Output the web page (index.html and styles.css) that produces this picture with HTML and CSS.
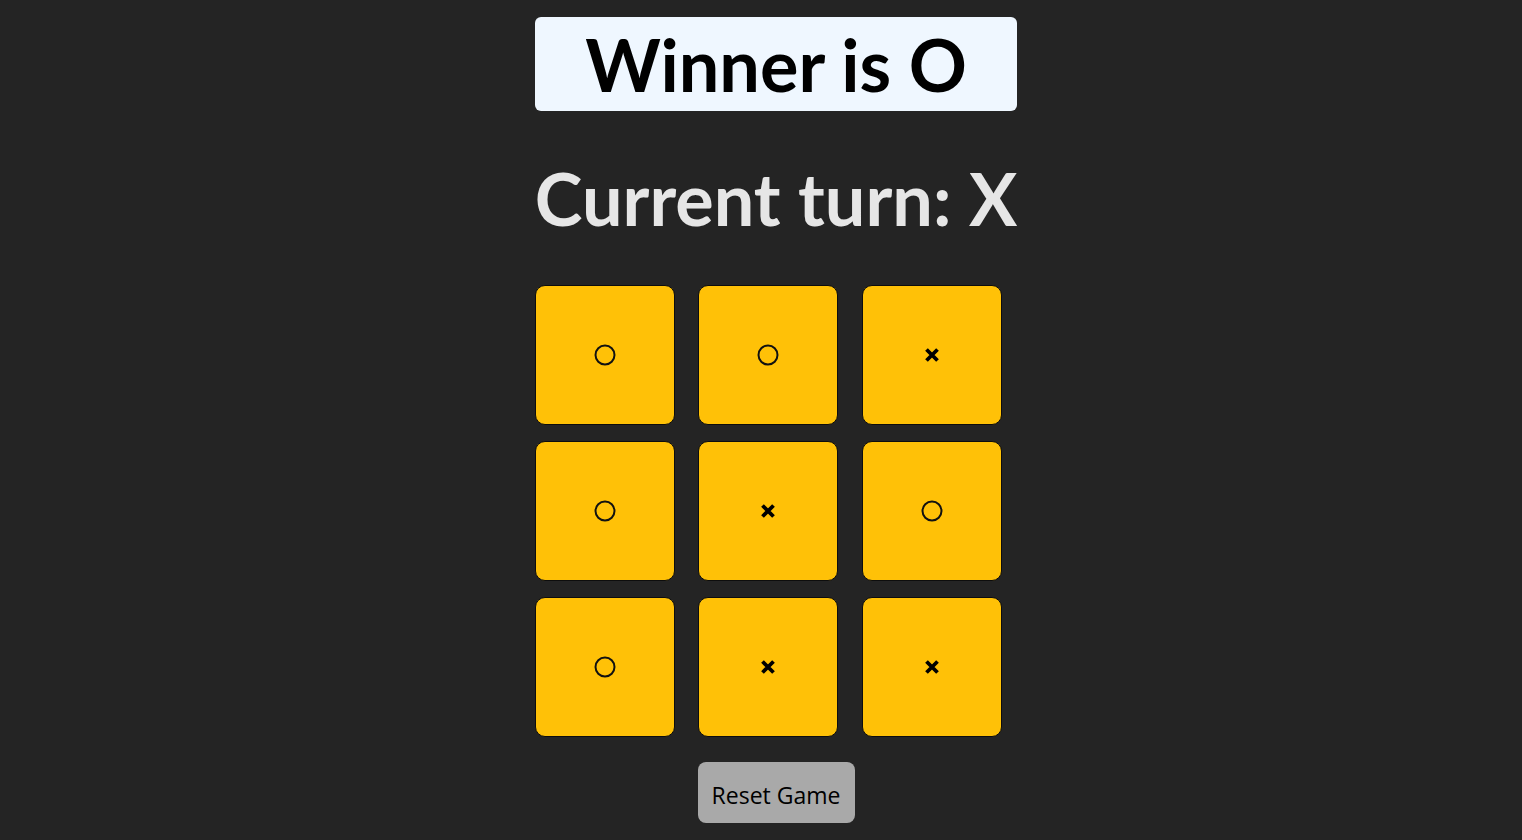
FILE: index.html
```html
<!DOCTYPE html>
<html>
<head>
<meta charset="utf-8">
<link rel="stylesheet" href="styles.css">
</head>
<body>
<main class="game">
  <div class="winner">Winner is O</div>
  <h1 class="turn">Current turn: X</h1>
  <div class="board">
    <button class="cell"><svg class="o" viewBox="0 0 22 22"><circle cx="11" cy="11" r="9.5"/></svg></button>
    <button class="cell"><svg class="o" viewBox="0 0 22 22"><circle cx="11" cy="11" r="9.5"/></svg></button>
    <button class="cell"><svg class="x" viewBox="0 0 16 16"><path d="M2.5 2.5 L13.5 13.5 M13.5 2.5 L2.5 13.5"/></svg></button>
    <button class="cell"><svg class="o" viewBox="0 0 22 22"><circle cx="11" cy="11" r="9.5"/></svg></button>
    <button class="cell"><svg class="x" viewBox="0 0 16 16"><path d="M2.5 2.5 L13.5 13.5 M13.5 2.5 L2.5 13.5"/></svg></button>
    <button class="cell"><svg class="o" viewBox="0 0 22 22"><circle cx="11" cy="11" r="9.5"/></svg></button>
    <button class="cell"><svg class="o" viewBox="0 0 22 22"><circle cx="11" cy="11" r="9.5"/></svg></button>
    <button class="cell"><svg class="x" viewBox="0 0 16 16"><path d="M2.5 2.5 L13.5 13.5 M13.5 2.5 L2.5 13.5"/></svg></button>
    <button class="cell"><svg class="x" viewBox="0 0 16 16"><path d="M2.5 2.5 L13.5 13.5 M13.5 2.5 L2.5 13.5"/></svg></button>
  </div>
  <button class="reset">Reset Game</button>
</main>
</body>
</html>
```
FILE: styles.css
```css
html, body {
  margin: 0;
  padding: 0;
  background: #242424;
  height: 100%;
}
body {
  display: flex;
  justify-content: center;
  padding-left: 30px;
  box-sizing: border-box;
  font-family: "Lato", "Open Sans", sans-serif;
}
.game {
  display: flex;
  flex-direction: column;
  padding-top: 17px;
}
.winner {
  background: #eff7ff;
  border-radius: 6px;
  height: 94px;
  line-height: 94px;
  text-align: center;
  font-size: 72px;
  font-weight: 700;
  color: #000;
}
.turn {
  margin: 42px 0 0;
  font-size: 72px;
  line-height: 90px;
  font-weight: 700;
  color: #e6e6e6;
  white-space: nowrap;
}
.board {
  margin-top: 42px;
  display: grid;
  grid-template-columns: repeat(3, 140px);
  grid-auto-rows: 140px;
  column-gap: 23.5px;
  row-gap: 16px;
}
.cell {
  background: #ffc107;
  border: 1px solid #0d0d0d;
  border-radius: 10px;
  padding: 0;
  display: flex;
  align-items: center;
  justify-content: center;
}
.o {
  width: 22px;
  height: 22px;
  fill: none;
  stroke: #111;
  stroke-width: 2;
}
.x {
  width: 16px;
  height: 16px;
  fill: none;
  stroke: #000;
  stroke-width: 3.8;
}
.reset {
  align-self: center;
  margin-top: 25px;
  width: 157px;
  height: 61px;
  background: #a9a9a9;
  border: none;
  border-radius: 8px;
  font-family: "Open Sans", sans-serif;
  font-size: 23px;
  color: #000;
  padding: 4px 0 0;
}
```
